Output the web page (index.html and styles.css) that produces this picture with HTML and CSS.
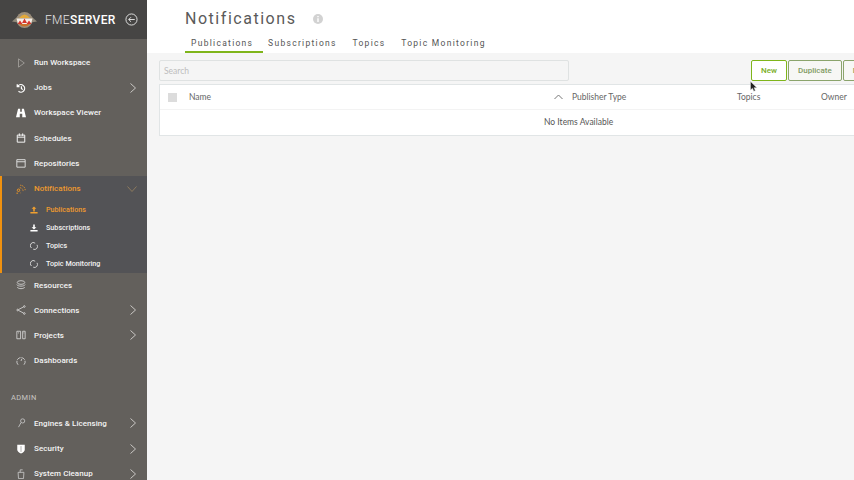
FILE: index.html
```html
<!DOCTYPE html>
<html lang="en">
<head>
<meta charset="utf-8">
<title>Notifications</title>
<link rel="stylesheet" href="styles.css">
</head>
<body>
<aside class="sidebar">
  <div class="brand">
    <svg class="logo" width="25" height="18" viewBox="0 0 25 18"><path d="M0 10.500L6 5H19L25 10.500 19 11.500H6Z" fill="#8f8778"/><circle cx="12.500" cy="9" r="8" fill="#9c8e7a"/><path d="M7 7Q12.500 0 18 7Z" fill="#e3a93a"/><path d="M4.500 7.500H20.500L19 13H6Z" fill="#f5efe8"/><path d="M5.500 13L8 9.500 10.500 13ZM10 12L12.500 7.500 15 12ZM14.500 13L17 9.500 19.500 13Z" fill="#d6362c"/><path d="M7 13H18Q12.500 18 7 13Z" fill="#c9702a"/></svg>
    <span class="wordmark"><span class="fme">FME</span><b>SERVER</b></span>
    <svg class="collapse" width="13" height="13" viewBox="0 0 14 14" fill="none" stroke="#e6e6e6" stroke-width="1"><circle cx="7" cy="7" r="6"/><path d="M10.500 7H4M6.500 4.500L4 7l2.500 2.500"/></svg>
  </div>
  <nav class="nav">
    <a class="item"><svg class="ic" viewBox="0 0 12 12" fill="none" stroke="#a5a29e"><path d="M3 1L10 6 3 11z"/></svg><span>Run Workspace</span></a>
    <a class="item"><svg class="ic" viewBox="0 0 12 12" fill="none" stroke="#fff" stroke-width="1.500"><path d="M2.500 3.500A4.500 4.500 0 1 1 3 10M1.500 1.500v2.700h2.700M6.500 4v2.500L8 8"/></svg><span>Jobs</span><svg class="chev" viewBox="0 0 6 10"><path d="M.5.500l5 4.500-5 4.500"/></svg></a>
    <a class="item"><svg class="ic" viewBox="0 0 12 12" fill="#fff"><path d="M2.500 1h2.500v3.500h2V1h2.500L12 11H7.500V7h-3v4H0z"/></svg><span>Workspace Viewer</span></a>
    <a class="item"><svg class="ic" viewBox="0 0 12 12" fill="none" stroke="#f2f2f2" stroke-width="1.200"><path d="M1.500 2.500h9v8.500h-9zM1.500 5h9M4 .5v3M8 .5v3"/></svg><span>Schedules</span></a>
    <a class="item"><svg class="ic" viewBox="0 0 12 12" fill="none" stroke="#d8d8d8" stroke-width="1.200"><path d="M1 2h10v9H1zM1 4.500h10"/></svg><span>Repositories</span></a>
    <div class="group">
      <a class="item active"><svg class="ic" viewBox="0 0 12 12" fill="none" stroke="#e8952a" stroke-width="1.200"><path stroke-dasharray="1.500 1" d="M5 1.500a6 6 0 0 1 6 6.500M4.500 4.500A4 4 0 0 1 8.500 8.500"/><circle cx="3" cy="7.500" r="1.500"/><path d="M.5 11h2M5.500 10.500v.5"/></svg><span>Notifications</span><svg class="chev" viewBox="0 0 10 6"><path d="M.5.500l4.500 5 4.500-5"/></svg></a>
      <a class="sub active"><svg class="sic" viewBox="0 0 10 10" fill="#f0a030"><path d="M5 .5L8 3.500H6V7H4V3.500H2zM.5 7.500h9v2h-9z"/></svg><span>Publications</span></a>
      <a class="sub"><svg class="sic" viewBox="0 0 10 10" fill="#fff"><path d="M4 .5h2V4h2L5 7 2 4h2zM.5 7.500h9v2h-9z"/></svg><span>Subscriptions</span></a>
      <a class="sub"><svg class="sic" viewBox="0 0 10 10" fill="none" stroke="#eee"><path d="M6.500 1.500A3.800 3.800 0 0 0 1.800 7.500M4 9A3.800 3.800 0 0 0 8.800 3.500"/></svg><span>Topics</span></a>
      <a class="sub"><svg class="sic" viewBox="0 0 10 10" fill="none" stroke="#eee"><path d="M6.500 1.500A3.800 3.800 0 0 0 1.800 7.500M4 9A3.800 3.800 0 0 0 8.800 3.500"/></svg><span>Topic Monitoring</span></a>
    </div>
    <a class="item"><svg class="ic" viewBox="0 0 12 12" fill="none" stroke="#d8d8d8"><ellipse cx="6" cy="3" rx="4.500" ry="2.200"/><path d="M1 5.500c1 2.500 9 2.500 10 0M1.500 8.500c1 2.500 8 2.500 9 0"/></svg><span>Resources</span></a>
    <a class="item"><svg class="ic" viewBox="0 0 12 12" fill="none" stroke="#d8d8d8"><circle cx="2" cy="6" r="1"/><circle cx="10" cy="1.800" r="1"/><circle cx="10" cy="10.200" r="1"/><path d="M3 5.500L9 2.300M3 6.500l6 3.200"/></svg><span>Connections</span><svg class="chev" viewBox="0 0 6 10"><path d="M.5.500l5 4.500-5 4.500"/></svg></a>
    <a class="item"><svg class="ic" viewBox="0 0 12 12" fill="none" stroke="#d8d8d8"><path d="M1 1.500h4.500v9H1zM8 1.500h3v9H8zM2.500 3.500h1M9 3.500h1"/></svg><span>Projects</span><svg class="chev" viewBox="0 0 6 10"><path d="M.5.500l5 4.500-5 4.500"/></svg></a>
    <a class="item"><svg class="ic" viewBox="0 0 12 12" fill="none" stroke="#d8d8d8"><path d="M2.500 10.500A5 5 0 1 1 9.500 10.500M6 6l1-2.500" stroke-dasharray="5 1"/></svg><span>Dashboards</span></a>
    <div class="section">ADMIN</div>
    <a class="item"><svg class="ic" viewBox="0 0 12 12" fill="none" stroke="#c8c8c8"><circle cx="8" cy="3.500" r="2.500"/><path d="M6 5.500L3 11"/></svg><span>Engines &amp; Licensing</span><svg class="chev" viewBox="0 0 6 10"><path d="M.5.500l5 4.500-5 4.500"/></svg></a>
    <a class="item"><svg class="ic" viewBox="0 0 12 12" fill="#fff"><path d="M1.500 1h9v5.500Q10.500 9.500 6 11.500 1.500 9.500 1.500 6.500z"/><path d="M6 2.500v7" stroke="#63605c" stroke-width=".6"/></svg><span>Security</span><svg class="chev" viewBox="0 0 6 10"><path d="M.5.500l5 4.500-5 4.500"/></svg></a>
    <a class="item"><svg class="ic" viewBox="0 0 12 12" fill="none" stroke="#c8c8c8"><path d="M2.500 4h7l-.5 7.500H3zM5 4V1h3"/></svg><span>System Cleanup</span><svg class="chev" viewBox="0 0 6 10"><path d="M.5.500l5 4.500-5 4.500"/></svg></a>
  </nav>
</aside>
<main class="main">
  <header class="head">
    <div class="title-row">
      <h1>Notifications</h1>
      <svg class="info" width="10" height="10" viewBox="0 0 10 10"><circle cx="5" cy="5" r="5" fill="#d2d2d2"/><path d="M4.300 2h1.400v1.300H4.300zM4.300 4.200h1.400V8H4.300z" fill="#fff"/></svg>
    </div>
    <div class="tabs">
      <a class="tab on">Publications</a>
      <a class="tab">Subscriptions</a>
      <a class="tab">Topics</a>
      <a class="tab">Topic Monitoring</a>
    </div>
  </header>
  <section class="content">
    <div class="toolbar">
      <div class="search">Search</div>
      <div class="buttons">
        <button class="btn primary">New</button>
        <button class="btn">Duplicate</button>
        <button class="btn">Delete</button>
      </div>
    </div>
    <div class="table">
      <div class="thead">
        <span class="check"></span>
        <span class="col-name">Name</span>
        <svg class="sort" width="9" height="6" viewBox="0 0 9 6" fill="none" stroke="#777"><path d="M.5 5L4.500 1l4 4"/></svg>
        <span>Publisher Type</span>
        <span>Topics</span>
        <span>Owner</span>
      </div>
      <div class="empty">No Items Available</div>
    </div>
  </section>
  <svg class="cursor" width="8" height="12" viewBox="0 0 8 12"><path d="M.5.500v8.500l2-1.800 1.300 3 1.500-.7-1.300-2.800h2.800z" fill="#222" stroke="#ddd" stroke-width=".5"/></svg>
</main>
</body>
</html>
```

FILE: styles.css
```css
* { box-sizing: border-box; }
html, body { margin: 0; height: 100%; overflow: hidden; }
body { display: flex; width: 854px; height: 480px; font-family: Roboto, "Liberation Sans", sans-serif; background: #fff; }

.sidebar { flex: 0 0 147px; background: #63605c; color: #fff; overflow: hidden; }
.brand { height: 39px; background: #464544; display: flex; align-items: center; padding-left: 12px; }
.logo { flex: none; margin-right: 8px; }
.wordmark { font-size: 12px; letter-spacing: .35px; color: #e4e4e4; white-space: nowrap; line-height: 1; }
.fme { font-weight: 300; }
.wordmark b { font-weight: 500; color: #fff; }
.collapse { margin-left: 9px; flex: none; }

.nav { padding-top: 11px; }
.item { height: 25.200px; display: flex; align-items: center; padding: 0 11px 0 16px; font-size: 8px; font-weight: 500; letter-spacing: .05px; color: #f4f4f4; white-space: nowrap; }
.ic { width: 10px; height: 10px; flex: none; margin-right: 8px; }
.chev { width: 6px; height: 10px; margin-left: auto; fill: none; stroke: #c9c7c4; stroke-width: 1; flex: none; }
.group { background: #535356; border-left: 2px solid #f0910f; padding-top: 1px; margin-bottom: -.500px; }
.group .item { padding-left: 14px; height: 24px; }
.item.active { color: #ef9a2e; }
.item.active .chev { width: 10px; height: 6px; stroke: #8d7a5e; margin-right: -1px; }
.sub { height: 18px; display: flex; align-items: center; padding-left: 28px; font-size: 7.200px; font-weight: 500; color: #f2f2f2; white-space: nowrap; }
.sub.active { color: #ef9a2e; }
.sic { width: 8px; height: 8px; flex: none; margin-right: 8px; }
.section { margin-top: 17px; height: 15px; padding-left: 11px; font-size: 7.500px; letter-spacing: .4px; color: #c8c6c3; line-height: 15px; margin-bottom: 5.700px; }

.main { flex: 1; min-width: 0; position: relative; display: flex; flex-direction: column; }
.head { height: 53px; background: #fff; padding: 9px 0 0 38px; }
.title-row { display: flex; align-items: center; gap: 17px; height: 20px; }
h1 { margin: 0; font-size: 16px; font-weight: 400; letter-spacing: 1.530px; color: #5a5a5a; line-height: 20px; }
.tabs { display: flex; gap: 5px; margin-top: 7px; }
.tab { font-size: 8.500px; letter-spacing: 1.290px; color: #555; padding: 0 5.400px; height: 17px; line-height: 15px; }
.tabs .tab.on { border-bottom: 2px solid #7fb51b; padding: 0 9.800px 0 6px; margin-right: -5.400px; }

.content { flex: 1; background: #f5f5f5; padding: 7px 0 0 12px; min-width: 0; }
.toolbar { display: flex; gap: 182px; height: 21px; }
.search { flex: none; width: 410px; height: 21px; border: 1px solid #dfe2e2; border-radius: 2px; font-family: Lato, sans-serif; font-size: 8.500px; line-height: 20px; padding-left: 4px; color: #bdbdbd; background: #f5f5f5; }
.buttons { display: flex; flex: none; gap: 1px; }
.btn { font: 500 8px Roboto, sans-serif; height: 21px; background: #f7f7f5; border: 1px solid #8ba46c; border-radius: 2px; color: #7f9a62; padding: 0 9px; }
.btn.primary { width: 36px; padding: 0; background: #fff; border-color: #7fb51b; color: #79ad1d; }
.table { width: 760px; margin-top: 3px; height: 52px; background: #fff; border: 1px solid #e1e5e6; font-family: Lato, sans-serif; }
.thead { height: 25px; display: grid; grid-template-columns: 9px 12px 365px 9px 9px 165px 84px 60px; align-items: center; padding-left: 8px; border-bottom: 1px solid #f3f3f3; font-size: 8.500px; color: #666; }
.thead .check { grid-column: 1; width: 9px; height: 9px; background: #dcdcdc; }
.thead .col-name { grid-column: 3; }
.thead .sort { grid-column: 4; }
.thead span:nth-of-type(3) { grid-column: 6; }
.thead span:nth-of-type(4) { grid-column: 7; }
.thead span:nth-of-type(5) { grid-column: 8; }
.empty { height: 25px; line-height: 25px; font-size: 8.500px; color: #555; padding-left: 384px; }
.cursor { position: absolute; left: 603px; top: 81px; }
```
